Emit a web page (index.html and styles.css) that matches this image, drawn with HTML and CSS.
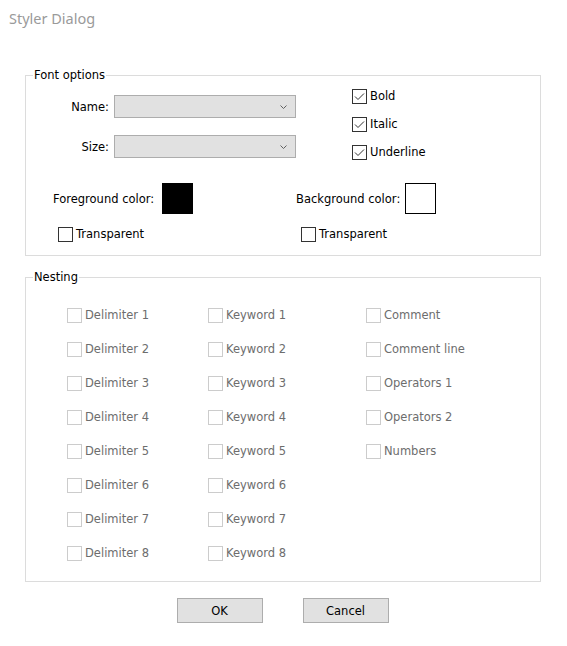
FILE: index.html
```html
<!DOCTYPE html>
<html>
<head>
<meta charset="utf-8">
<title>Styler Dialog</title>
<link rel="stylesheet" href="styles.css">
</head>
<body>
<div class="dialog">
  <div class="title">Styler Dialog</div>

  <fieldset class="group font-group">
    <legend>Font options</legend>
    <div class="font-top">
      <div class="combos">
        <span class="field-label">Name:</span>
        <div class="combo"><svg class="chev" width="7" height="4" viewBox="0 0 7 4"><path d="M0.5 0.5 L3.5 3.5 L6.5 0.5" fill="none" stroke="#606060" stroke-width="1"/></svg></div>
        <span class="field-label">Size:</span>
        <div class="combo"><svg class="chev" width="7" height="4" viewBox="0 0 7 4"><path d="M0.5 0.5 L3.5 3.5 L6.5 0.5" fill="none" stroke="#606060" stroke-width="1"/></svg></div>
      </div>
      <div class="styles">
        <div class="check"><span class="box"><svg width="13" height="13" viewBox="0 0 13 13"><path d="M2 6.5 L5 9.5 L11 3.5" fill="none" stroke="#333" stroke-width="1"/></svg></span>Bold</div>
        <div class="check"><span class="box"><svg width="13" height="13" viewBox="0 0 13 13"><path d="M2 6.5 L5 9.5 L11 3.5" fill="none" stroke="#333" stroke-width="1"/></svg></span>Italic</div>
        <div class="check"><span class="box"><svg width="13" height="13" viewBox="0 0 13 13"><path d="M2 6.5 L5 9.5 L11 3.5" fill="none" stroke="#333" stroke-width="1"/></svg></span>Underline</div>
      </div>
    </div>
    <div class="colors">
      <div class="color-field"><span class="color-label">Foreground color:</span><span class="swatch swatch-black"></span></div>
      <div class="color-field"><span class="color-label">Background color:</span><span class="swatch swatch-white"></span></div>
    </div>
    <div class="transparent-row">
      <div class="check trans"><span class="box"></span>Transparent</div>
      <div class="check trans"><span class="box"></span>Transparent</div>
    </div>
  </fieldset>

  <fieldset class="group nesting-group">
    <legend>Nesting</legend>
    <div class="nest-grid">
      <div class="check disabled"><span class="box"></span>Delimiter 1</div>
      <div class="check disabled"><span class="box"></span>Delimiter 2</div>
      <div class="check disabled"><span class="box"></span>Delimiter 3</div>
      <div class="check disabled"><span class="box"></span>Delimiter 4</div>
      <div class="check disabled"><span class="box"></span>Delimiter 5</div>
      <div class="check disabled"><span class="box"></span>Delimiter 6</div>
      <div class="check disabled"><span class="box"></span>Delimiter 7</div>
      <div class="check disabled"><span class="box"></span>Delimiter 8</div>
      <div class="check disabled"><span class="box"></span>Keyword 1</div>
      <div class="check disabled"><span class="box"></span>Keyword 2</div>
      <div class="check disabled"><span class="box"></span>Keyword 3</div>
      <div class="check disabled"><span class="box"></span>Keyword 4</div>
      <div class="check disabled"><span class="box"></span>Keyword 5</div>
      <div class="check disabled"><span class="box"></span>Keyword 6</div>
      <div class="check disabled"><span class="box"></span>Keyword 7</div>
      <div class="check disabled"><span class="box"></span>Keyword 8</div>
      <div class="check disabled"><span class="box"></span>Comment</div>
      <div class="check disabled"><span class="box"></span>Comment line</div>
      <div class="check disabled"><span class="box"></span>Operators 1</div>
      <div class="check disabled"><span class="box"></span>Operators 2</div>
      <div class="check disabled"><span class="box"></span>Numbers</div>
    </div>
  </fieldset>

  <div class="buttons">
    <button class="btn">OK</button>
    <button class="btn">Cancel</button>
  </div>
</div>
</body>
</html>
```

FILE: styles.css
```css
html, body {
  margin: 0;
  padding: 0;
  background: #ffffff;
}

body {
  font-family: "DejaVu Sans", "Liberation Sans", sans-serif;
  font-size: 11.5px;
  color: #000000;
}

.dialog {
  width: 567px;
  height: 646px;
  overflow: hidden;
}

.title {
  font-family: "Noto Sans", "Open Sans", sans-serif;
  font-size: 14.5px;
  line-height: 19px;
  color: #9a9a9a;
  padding: 9px 0 0 9px;
  height: 28px;
  box-sizing: border-box;
  margin-bottom: 41px;
}

.group {
  margin: 0 26px 0 25px;
  padding: 0;
  border: 1px solid #dcdcdc;
  min-width: 0;
}

.group legend {
  margin-left: 7px;
  padding: 0 1px;
  line-height: 13px;
  font-size: 11.5px;
}

.font-group {
  padding-bottom: 13px;
}

.font-top {
  display: flex;
  align-items: flex-start;
}

.combos {
  display: grid;
  grid-template-columns: 83px 182px;
  column-gap: 5px;
  row-gap: 17px;
  margin-top: 13px;
}

.field-label {
  text-align: right;
  align-self: center;
}

.combo {
  height: 23px;
  box-sizing: border-box;
  background: #e1e1e1;
  border: 1px solid #adadad;
  display: flex;
  align-items: center;
  justify-content: flex-end;
  padding-right: 8px;
}

.chev {
  display: block;
}

.styles {
  margin-left: 56px;
  margin-top: 7px;
  display: flex;
  flex-direction: column;
  gap: 13px;
}

.check {
  display: flex;
  align-items: center;
  gap: 3px;
  height: 15px;
  line-height: 15px;
  white-space: nowrap;
}

.box {
  width: 15px;
  height: 15px;
  box-sizing: border-box;
  border: 1px solid #333333;
  background: #ffffff;
  flex: none;
}

.box svg {
  display: block;
}

.colors {
  display: flex;
  margin-top: 23px;
  padding-left: 27px;
}

.color-field {
  width: 243px;
  display: flex;
  align-items: center;
  flex: none;
}

.color-label {
  width: 109px;
  flex: none;
}

.swatch {
  width: 31px;
  height: 31px;
  box-sizing: border-box;
  border: 1px solid #000000;
}

.swatch-black {
  background: #000000;
}

.swatch-white {
  background: #ffffff;
}

.transparent-row {
  display: flex;
  margin-top: 12px;
  padding-left: 32px;
}

.transparent-row .trans {
  width: 243px;
  flex: none;
  padding-top: 1px;
}

.nesting-group {
  margin-top: 15px;
  padding-bottom: 20px;
}

.nest-grid {
  display: grid;
  grid-template-columns: 141px 158px auto;
  grid-template-rows: repeat(8, 15px);
  grid-auto-flow: column;
  row-gap: 19px;
  margin-top: 24px;
  padding-left: 41px;
}

.check.disabled {
  color: #6d6d6d;
}

.check.disabled .box {
  border-color: #cccccc;
}

.buttons {
  display: flex;
  justify-content: center;
  gap: 40px;
  margin: 16px 27px 0 25px;
}

.btn {
  width: 86px;
  height: 25px;
  box-sizing: border-box;
  background: #e1e1e1;
  border: 1px solid #adadad;
  border-radius: 0;
  font-family: "DejaVu Sans", "Liberation Sans", sans-serif;
  font-size: 11.5px;
  color: #000000;
  padding: 0;
  margin: 0;
}
```
